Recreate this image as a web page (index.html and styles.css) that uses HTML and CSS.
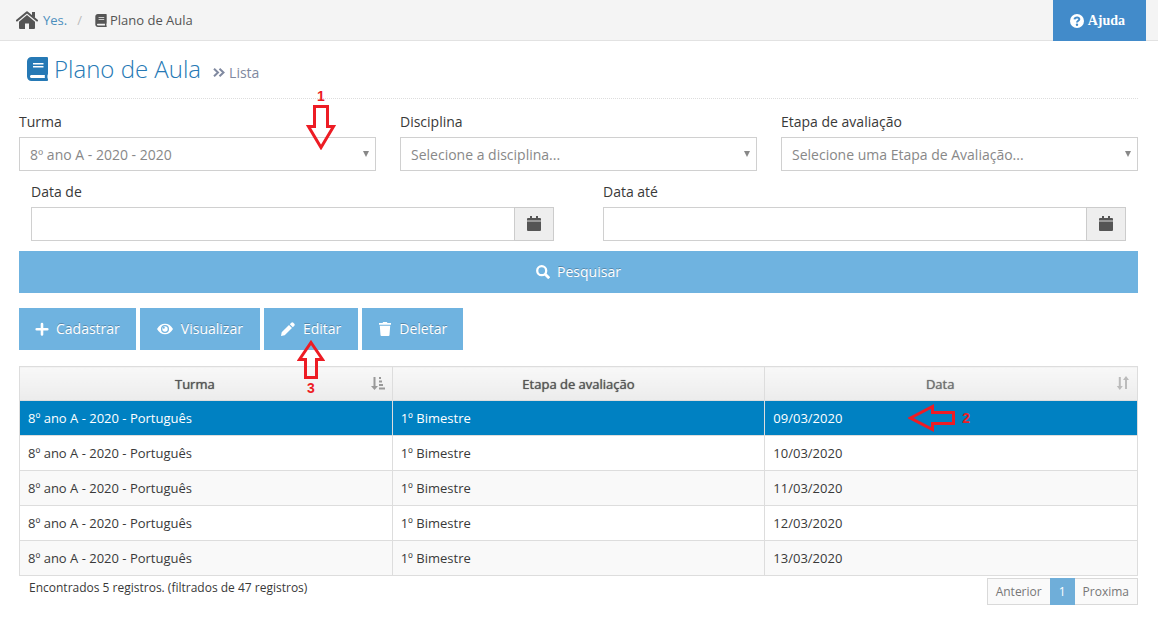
FILE: index.html
```html
<!DOCTYPE html>
<html lang="pt-BR">
<head>
<meta charset="utf-8">
<meta name="viewport" content="width=device-width, initial-scale=1">
<title>Plano de Aula</title>
<link rel="stylesheet" href="styles.css">
</head>
<body>
<svg class="defs" aria-hidden="true">
  <symbol id="book" viewBox="0 0 448 512"><path fill="currentColor" d="M448 360V24c0-13-11-24-24-24H96C43 0 0 43 0 96v320c0 53 43 96 96 96h328c13 0 24-11 24-24v-16c0-7-4-14-9-19-4-15-4-59 0-74 5-4 9-11 9-19zM128 134c0-3 3-6 6-6h212c3 0 6 3 6 6v20c0 3-3 6-6 6H134c-3 0-6-3-6-6v-20zm0 64c0-3 3-6 6-6h212c3 0 6 3 6 6v20c0 3-3 6-6 6H134c-3 0-6-3-6-6v-20zm253 250H96c-18 0-32-14-32-32s14-32 32-32h285c-2 17-2 47 0 64z"/></symbol>
  <symbol id="calendar" viewBox="0 0 14 15"><path fill="currentColor" d="M3 0h2v2h4V0h2v2h2q1 0 1 1v1H0V3q0-1 1-1h2zM0 6h14v8q0 1-1 1H1q-1 0-1-1z"/><path fill="#999" d="M0 4h14v2H0z"/></symbol>
</svg>

<header class="topbar">
  <nav class="breadcrumb" aria-label="Navegação">
    <svg class="icon-home" viewBox="0 0 22 18" aria-hidden="true"><path fill="currentColor" d="M11 4 3 10.700V17q0 1 1 1h5v-5.500h4V18h5q1 0 1-1v-6.300z"/><path fill="none" stroke="currentColor" stroke-width="2" stroke-linecap="round" stroke-linejoin="round" d="M1 9.500 11 1.300 21 9.500"/><path fill="currentColor" d="M16 1h3v6l-3-2z"/></svg>
    <a href="#">Yes.</a>
    <span class="slash">/</span>
    <svg class="icon-book" aria-hidden="true"><use href="#book"/></svg>
    <span>Plano de Aula</span>
  </nav>
  <a class="help" href="#">
    <svg class="icon-help" viewBox="0 0 14 14" aria-hidden="true"><circle cx="7" cy="7" r="7" fill="currentColor"/><path fill="none" stroke="#428bca" stroke-width="2" d="M4.500 5.400C5 2.700 9.600 3 9.300 5.300 9.100 6.800 7 6.700 7 8.500"/><circle cx="7" cy="10.800" r="1.200" fill="#428bca"/></svg>
    Ajuda
  </a>
</header>

<main class="content">
  <div class="page-header">
    <svg class="icon-title" aria-hidden="true"><use href="#book"/></svg>
    <h1>Plano de Aula</h1>
    <span class="subtitle"><svg class="icon-angles" viewBox="0 0 12 9" aria-hidden="true"><path fill="none" stroke="currentColor" stroke-width="2" d="m1 .7 4 3.800-4 3.800M6.500.7l4 3.800-4 3.800"/></svg>Lista</span>
  </div>

  <form class="filters">
    <div class="row-three">
      <div class="field marked">
        <label for="turma">Turma</label>
        <div class="select"><select id="turma"><option>8º ano A - 2020 - 2020</option></select></div>
        <div class="marker marker-down"><span>1</span>
          <svg width="30" height="46" viewBox="0 0 30 46" aria-hidden="true"><path d="M8.500 2.500h13v20h6L15 43.500 2.500 22.500h6z"/></svg>
        </div>
      </div>
      <div class="field">
        <label for="disciplina">Disciplina</label>
        <div class="select"><select id="disciplina"><option>Selecione a disciplina...</option></select></div>
      </div>
      <div class="field">
        <label for="etapa">Etapa de avaliação</label>
        <div class="select"><select id="etapa"><option>Selecione uma Etapa de Avaliação...</option></select></div>
      </div>
    </div>
    <div class="row-two">
      <div class="field">
        <label for="de">Data de</label>
        <div class="date"><input id="de" type="text"><button type="button" aria-label="Abrir calendário"><svg class="icon-cal" aria-hidden="true"><use href="#calendar"/></svg></button></div>
      </div>
      <div class="field">
        <label for="ate">Data até</label>
        <div class="date"><input id="ate" type="text"><button type="button" aria-label="Abrir calendário"><svg class="icon-cal" aria-hidden="true"><use href="#calendar"/></svg></button></div>
      </div>
    </div>
    <button class="btn search" type="button"><svg class="icon" viewBox="0 0 14 14" aria-hidden="true"><circle cx="5.700" cy="5.700" r="4.500" fill="none" stroke="currentColor" stroke-width="2.300"/><path stroke="currentColor" stroke-width="2.800" d="m9 9 4.200 4.200"/></svg>Pesquisar</button>
  </form>

  <div class="actions">
    <button class="btn" type="button"><svg class="icon" viewBox="0 0 14 14" aria-hidden="true"><path stroke="currentColor" stroke-width="2.600" stroke-linecap="round" d="M7 2v10.500M1.700 7.200h10.600"/></svg>Cadastrar</button>
    <button class="btn btn-wide" type="button"><svg class="icon-wide" viewBox="0 0 16 12" aria-hidden="true"><path fill="currentColor" fill-rule="evenodd" d="M0 6q3-5.300 8-5.300T16 6q-3 5.300-8 5.300T0 6zm8-4a4 4 0 1 0 0 8 4 4 0 0 0 0-8z"/><circle cx="8" cy="6" r="2.700" fill="currentColor"/><circle cx="6.800" cy="4.800" r="1" fill="#6fb3e0"/></svg>Visualizar</button>
    <div class="marked">
      <button class="btn btn-wide" type="button"><svg class="icon" viewBox="0 0 14 14" aria-hidden="true"><path fill="currentColor" d="M0 14 .7 10.300 8 3l3 3-7.300 7.300zM8.800 2.200 10.300.7q1-.9 2 0l1 1q.9 1 0 2L11.800 5.200z"/></svg>Editar</button>
      <div class="marker marker-up">
        <svg width="28" height="40" viewBox="0 0 28 40" aria-hidden="true"><path d="M14 2.500 25.500 19.500h-6v18h-11v-18h-6z"/></svg>
        <span>3</span></div>
    </div>
    <button class="btn" type="button"><svg class="icon" viewBox="0 0 14 14" aria-hidden="true"><path fill="currentColor" d="M1 1h3.500l.7-1h3.600l.7 1H13v1.800H1zM1.800 3.700h10.400l-.7 9.300q0 1-1 1h-7q-1 0-1-1z"/></svg>Deletar</button>
  </div>

  <table class="grid">
    <thead>
      <tr>
        <th class="sortable">Turma<svg class="sort" viewBox="0 0 14 14" aria-hidden="true"><path fill="none" stroke="currentColor" stroke-width="2" d="M3.500 1v10"/><path fill="currentColor" d="M0 10h7l-3.500 4zM8 1h2v2H8zM8 4.500h3v2H8zM8 8h4v2H8zM8 11.500h6v2H8z"/></svg></th>
        <th>Etapa de avaliação</th>
        <th class="sortable last">Data<svg class="sort sort-idle" viewBox="0 0 14 14" aria-hidden="true"><path stroke="currentColor" stroke-width="2" d="M3.800 1v10M10 3v10"/><path fill="currentColor" d="M.8 10h6l-3 4zM7 4h6l-3-4z"/></svg></th>
      </tr>
    </thead>
    <tbody>
      <tr class="selected"><td>8º ano A - 2020 - Português</td><td>1º Bimestre</td><td><div class="marked">09/03/2020<div class="marker marker-left"><svg width="48" height="28" viewBox="0 0 48 28" aria-hidden="true"><path d="M2.500 14 24.500 2.500v6h21v11h-21v6z"/></svg><span>2</span></div></div></td></tr>
      <tr><td>8º ano A - 2020 - Português</td><td>1º Bimestre</td><td>10/03/2020</td></tr>
      <tr><td>8º ano A - 2020 - Português</td><td>1º Bimestre</td><td>11/03/2020</td></tr>
      <tr><td>8º ano A - 2020 - Português</td><td>1º Bimestre</td><td>12/03/2020</td></tr>
      <tr><td>8º ano A - 2020 - Português</td><td>1º Bimestre</td><td>13/03/2020</td></tr>
    </tbody>
  </table>

  <footer class="table-footer">
    <span>Encontrados 5 registros. (filtrados de 47 registros)</span>
    <nav class="pager" aria-label="Paginação"><a href="#">Anterior</a><a class="current" href="#" aria-current="page">1</a><a href="#">Proxima</a></nav>
  </footer>
</main>
</body>
</html>
```
FILE: styles.css
```css
* { box-sizing: border-box; }
body {
  margin: 0;
  background: #fff;
  color: #393939;
  font: 14px/20px "Open Sans", sans-serif;
}
a { text-decoration: none; }
button, input, select { font: inherit; margin: 0; border-radius: 0; }
svg { display: block; flex: none; }
.defs { position: absolute; width: 0; height: 0; }

.topbar {
  display: flex;
  justify-content: space-between;
  height: 41px;
  padding: 0 12px 0 16px;
  background: #f4f4f4;
  border-bottom: 1px solid #e2e2e2;
}
.breadcrumb { display: flex; align-items: center; font-size: 13px; color: #555; }
.breadcrumb a { margin-left: 5px; color: #4c8fbd; }
.slash { margin: 0 13px 0 10px; color: #bbb; }
.icon-home { width: 22px; height: 18px; }
.icon-book { width: 12px; height: 13px; margin-right: 3px; }
.help {
  display: flex;
  align-items: center;
  gap: 4px;
  height: 41px;
  padding: 0 21px 0 17px;
  background: #428bca;
  color: #fff;
  font: bold 14px/20px "Liberation Serif", serif;
}
.icon-help { width: 14px; height: 14px; }

.content { padding: 0 20px 0 19px; }
.page-header {
  display: flex;
  align-items: center;
  height: 58px;
  margin-bottom: 13px;
  padding: 0 0 2px 8px;
  border-bottom: 1px dotted #ddd;
  color: #2679b5;
}
.icon-title { width: 21px; height: 24px; margin-right: 6px; }
h1 { margin: 0; font-size: 24px; line-height: 32px; font-weight: 300; }
.subtitle {
  display: flex;
  align-items: center;
  gap: 4px;
  margin: 8px 0 0 12px;
  color: #8089a0;
}
.icon-angles { width: 12px; height: 9px; }

.row-three { display: grid; grid-template-columns: repeat(3, 1fr); gap: 24px; }
.row-two {
  display: grid;
  grid-template-columns: repeat(2, 1fr);
  gap: 49px;
  margin: 11px 0 10px;
  padding: 0 12px;
}
label { display: block; margin-bottom: 5px; }
.select { position: relative; }
.select::after {
  content: "";
  position: absolute;
  top: 14px;
  right: 7px;
  border: solid transparent;
  border-width: 6px 3px 0;
  border-top-color: #888;
  pointer-events: none;
}
select {
  display: block;
  width: 100%;
  height: 34px;
  padding: 2px 10px 0;
  appearance: none;
  background: #fff;
  border: 1px solid #d0d0d0;
  color: #888;
}
.date { display: flex; }
.date input {
  flex: 1;
  min-width: 0;
  height: 34px;
  padding: 0 8px;
  border: 1px solid #d0d0d0;
  border-right: 0;
}
.date button {
  display: flex;
  align-items: center;
  justify-content: center;
  width: 40px;
  padding: 0 1px 2px 0;
  background: #eee;
  border: 1px solid #ccc;
  color: #555;
}
.icon-cal { width: 14px; height: 15px; }

.btn {
  display: flex;
  align-items: center;
  justify-content: center;
  gap: 7px;
  height: 42px;
  padding: 0 16px;
  border: 0;
  background: #6fb3e0;
  color: #fff;
  text-shadow: 0 -1px 0 rgba(0, 0, 0, .25);
}
.btn-wide { gap: 8px; padding: 0 17px; }
.search { width: 100%; }
.icon { width: 14px; height: 14px; }
.icon-wide { width: 16px; height: 12px; }
.actions { display: flex; gap: 4px; margin: 15px 0 16px; }

.grid {
  width: 100%;
  table-layout: fixed;
  border-collapse: collapse;
  font-size: 13px;
}
.grid th, .grid td { height: 35px; padding: 0 8px; border: 1px solid #ddd; text-align: left; }
.grid th {
  position: relative;
  height: 34px;
  background: linear-gradient(#f8f8f8, #ececec);
  color: #555;
  font-weight: 400;
  text-align: center;
  text-shadow: 0 0 1px currentColor;
}
.grid th.sortable { padding-right: 30px; }
.grid th.last { color: #707070; }
.sort { position: absolute; top: 9px; right: 7px; width: 14px; height: 14px; color: #999; }
.sort-idle { color: #bbb; }
tbody tr:nth-child(odd) { background: #f9f9f9; }
tbody tr.selected { background: #0081c2; color: #fff; }

.table-footer {
  display: flex;
  justify-content: space-between;
  align-items: flex-start;
  padding: 2px 0 0 10px;
  font-size: 12px;
}
.pager { display: flex; }
.pager a {
  padding: 3px 8px 2px;
  border: 1px solid #d9d9d9;
  background: #fafafa;
  color: #777;
}
.pager a:first-child { border-right: 0; }
.pager a:last-child { border-left: 0; }
.pager .current { background: #6faed9; border-color: #6faed9; color: #fff; }

.marked { position: relative; }
.marker {
  position: absolute;
  z-index: 1;
  display: flex;
  align-items: center;
  color: #ed1c24;
  font: bold 14px/16px "Liberation Sans", sans-serif;
  text-shadow: none;
  pointer-events: none;
}
.marker path { fill: none; stroke: currentColor; stroke-width: 3; }
.marker-down { flex-direction: column; top: -24px; right: 40px; }
.marker-up { flex-direction: column; top: 32px; left: 33px; }
.marker-left { top: -4px; left: 135px; gap: 6px; }
```
